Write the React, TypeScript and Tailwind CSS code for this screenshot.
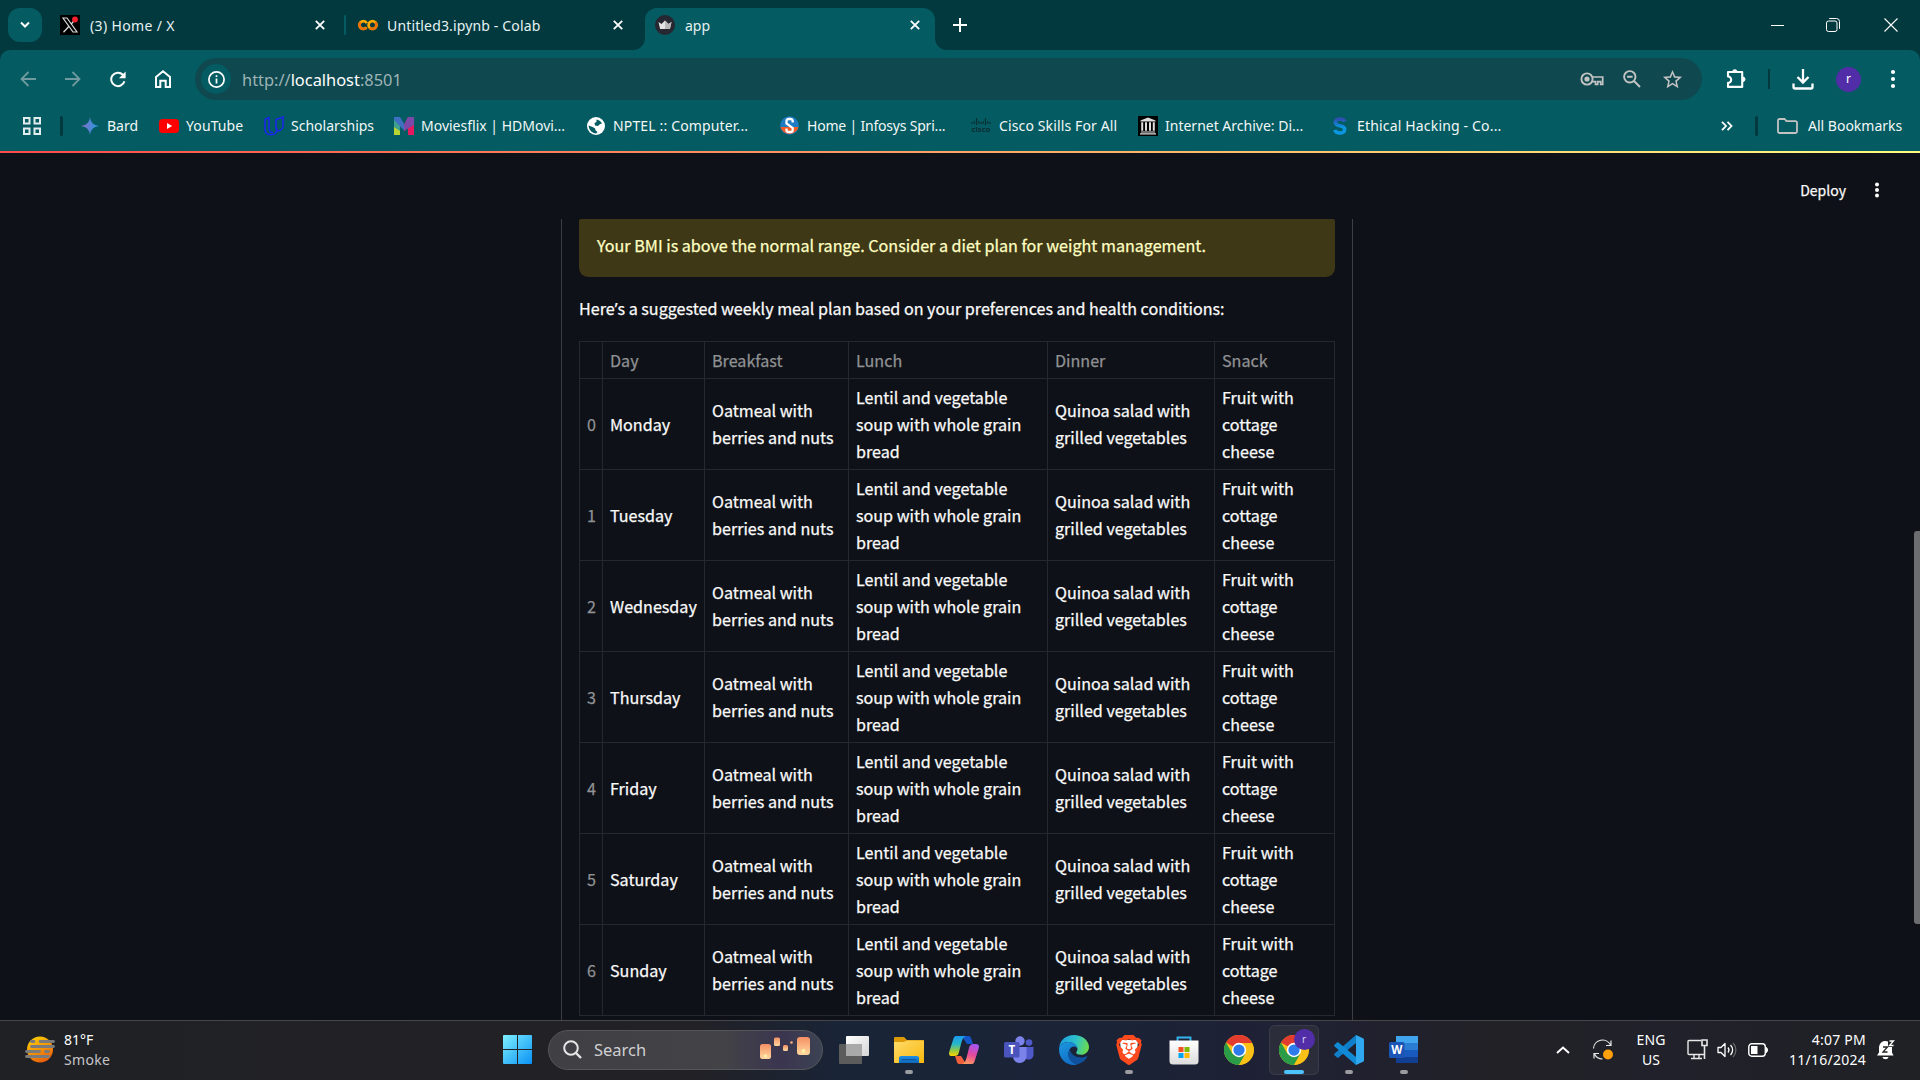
import React from 'react';
import { MdStarBorder } from 'react-icons/md';
import { SiBrave } from 'react-icons/si';

type Kids = { children?: React.ReactNode };

function Svg({ w, h, vb, className = '', children }: Kids & { w: number; h: number; vb?: string; className?: string }) {
  return (
    <svg width={w} height={h} viewBox={vb ?? `0 0 ${w} ${h}`} fill="none" className={'shrink-0 ' + className}>
      {children}
    </svg>
  );
}

/* ---------- Tab strip ---------- */

function TabClose() {
  return <Svg w={10} h={10} className="ml-[3px]"><path d="M.8.8l8.4 8.4M9.2.8L.8 9.2" stroke="#fff" strokeWidth="1.8" /></Svg>;
}

function TabStrip() {
  return (
    <div className="flex h-[50px] items-center bg-[#02393f] text-[14px] text-[#e6f1f2]">
      <div className="ml-2 grid h-[34px] w-[34px] place-items-center rounded-[12px] bg-[#045b61] text-white">
        <Svg w={12} h={8}><path d="M2 1.5l4 4 4-4" stroke="#fff" strokeWidth="2" /></Svg>
      </div>
      <div className="ml-[18px] flex w-[284px] items-center">
        <Svg w={20} h={20}>
          <rect width="20" height="20" fill="#000" />
          <path d="M3 3h4l10 14h-4z" stroke="#d8d8d8" strokeWidth="1.2" />
          <path d="M16.5 3L11 9.3M9 11.2L3.5 17.2" stroke="#d8d8d8" strokeWidth="1.3" />
          <circle cx="15" cy="4.5" r="2.9" fill="#f4212e" />
        </Svg>
        <span className="ml-[10px] w-[222px] pt-[2px] tracking-[0.35px]">(3) Home / X</span>
        <TabClose />
      </div>
      <div className="h-5 w-[2px] rounded bg-[#045b61]" />
      <div className="ml-3 flex w-[287px] items-center">
        <Svg w={20} h={20}>
          <circle cx="5.4" cy="10" r="3.9" stroke="#f9ab00" strokeWidth="2.8" strokeDasharray="19.5 5" strokeDashoffset="-2.4" />
          <circle cx="14.5" cy="10" r="3.9" stroke="#f9ab00" strokeWidth="2.8" />
          <path d="M11.7 12.8a3.9 3.9 0 0 0 5.6-5.6" stroke="#e8710a" strokeWidth="2.8" />
          <path d="M2.6 7.2a3.9 3.9 0 0 0 5.5 5.6" stroke="#e8710a" strokeWidth="2.8" />
        </Svg>
        <span className="ml-[9px] w-[223px] pt-[2px] tracking-[0.15px]">Untitled3.ipynb - Colab</span>
        <TabClose />
      </div>
      <div className="relative flex h-[42px] w-[290px] items-center self-end rounded-t-[12px] bg-[#045b61] pb-2 pl-[10px]">
        <Svg w={12} h={12} className="absolute bottom-0 -left-3"><path d="M12 0v12H0A12 12 0 0 0 12 0z" fill="#045b61" /></Svg>
        <Svg w={12} h={12} className="absolute bottom-0 -right-3"><path d="M0 0v12h12A12 12 0 0 1 0 0z" fill="#045b61" /></Svg>
        <Svg w={20} h={20}>
          <circle cx="10" cy="10" r="10" fill="#262730" />
          <path d="M3.5 7l3 2 3.500-3.600L13.500 9l3-2-1.600 7H5.100z" fill="#e4e4e4" />
          <path d="M10 5.400L13.500 9l3-2-1.600 7H10z" fill="#b9b9b9" />
        </Svg>
        <span className="ml-[10px] w-[222px] pt-[2px]">app</span>
        <TabClose />
      </div>
      <Svg w={14} h={14} className="ml-[18px]"><path d="M7 0v14M0 7h14" stroke="#fff" strokeWidth="2" /></Svg>
      <Svg w={13} h={14} className="mr-[42px] ml-auto"><path d="M0 7.5h13" stroke="#fff" /></Svg>
      <Svg w={14} h={14} className="mr-[44px]">
        <rect x=".5" y="3" width="10.5" height="10.5" rx="2" stroke="#fff" />
        <path d="M3.2.5h7.300a3 3 0 0 1 3 3v7.300" stroke="#fff" />
      </Svg>
      <Svg w={14} h={14} className="mr-[22px]"><path d="M.5.5l13 13M13.500.5l-13 13" stroke="#fff" strokeWidth="1.1" /></Svg>
    </div>
  );
}

/* ---------- Toolbar ---------- */

function Toolbar() {
  return (
    <div className="bg-[#02393f]">
      <div className="flex h-[50px] items-end rounded-t-[10px] bg-[#045b61]">
        <div className="flex h-[42px] w-[195px] items-center">
          <Svg w={16} h={16} className="ml-5"><path d="M16 8H1.500M8.500 1L1.500 8l7 7" stroke="#6f9a9f" strokeWidth="1.8" /></Svg>
          <Svg w={16} h={16} className="ml-[29px]"><path d="M0 8h14.500M7.500 1l7 7-7 7" stroke="#6f9a9f" strokeWidth="1.8" /></Svg>
          <Svg w={16} h={17} className="ml-[29px]">
            <path d="M14.400 10.200A6.700 6.700 0 1 1 12.800 3.800L14.600 5.800" stroke="#fff" strokeWidth="2" />
            <path d="M15.600.6v6.600H9z" fill="#fff" />
          </Svg>
          <Svg w={16} h={18} className="ml-[29px]">
            <path d="M1 7l7-5.700L15 7v10h-4.300v-6.200H5.300V17H1z" stroke="#fff" strokeWidth="2" />
          </Svg>
        </div>
        <div className="flex h-[42px] w-[1507px] items-center rounded-full bg-[#0f484f]">
          <div className="ml-[6px] grid h-[30px] w-[30px] place-items-center rounded-full bg-[#045b61]">
            <Svg w={17} h={17}>
              <circle cx="8.5" cy="8.5" r="7.6" stroke="#fff" strokeWidth="1.7" />
              <path d="M8.500 7.600v5M8.500 4.300v1.800" stroke="#fff" strokeWidth="1.7" />
            </Svg>
          </div>
          <span className="ml-[11px] pt-px text-[16.4px] text-[#9db4b6]">http://<span className="text-white">localhost</span>:8501</span>
          <Svg w={24} h={14} className="mr-[19px] ml-auto">
            <circle cx="7" cy="7" r="5.6" stroke="#c3c3c3" strokeWidth="1.9" />
            <circle cx="7" cy="7" r="2.6" fill="#c3c3c3" />
            <path d="M12.300 5h10.400v7.500h-2V9.700h-3v2.800h-2.200V9.700h-3.200" stroke="#c3c3c3" strokeWidth="1.7" />
          </Svg>
          <Svg w={18} h={18} className="mr-[20px]">
            <circle cx="6.8" cy="6.8" r="5.7" stroke="#c3c3c3" strokeWidth="1.9" />
            <path d="M4 6.800h5.600M11 11l6 6" stroke="#c3c3c3" strokeWidth="2" />
          </Svg>
          <MdStarBorder size={23} color="#c3c3c3" className="mr-[18px]" />
        </div>
        <div className="flex h-[42px] flex-1 items-center">
          <Svg w={22} h={22} className="ml-[23px]">
            <path d="M3 4h14.200v14.900H3v-4a3 3 0 0 0 0-6.400z" stroke="#fff" strokeWidth="2.1" strokeLinejoin="round" />
            <path d="M7.500 4a2.300 2.300 0 0 1 4.600 0zM17.700 9v4.600a2.300 2.300 0 0 0 0-4.600z" fill="#fff" stroke="#fff" />
          </Svg>
          <div className="ml-[21px] h-5 w-[2px] bg-[#02393f]" />
          <Svg w={22} h={21} className="ml-[22px]">
            <path d="M11 0v13M5.500 8l5.500 5.500L16.500 8M1.500 14.500v3.500a1.500 1.500 0 0 0 1.500 1.500h16a1.500 1.500 0 0 0 1.500-1.500v-3.500" stroke="#fff" strokeWidth="2.3" />
          </Svg>
          <div className="ml-[22px] grid h-[25px] w-[25px] place-items-center rounded-full bg-[#512da8] text-[12px] leading-none text-white">r</div>
          <Svg w={6} h={20} className="ml-[29px]"><g fill="#fff"><circle cx="3" cy="3" r="2.1" /><circle cx="3" cy="10" r="2.1" /><circle cx="3" cy="17" r="2.1" /></g></Svg>
        </div>
      </div>
    </div>
  );
}

/* ---------- Bookmarks ---------- */

const bookmarkIcons: Record<string, React.ReactNode> = {
  bard: (
    <Svg w={18} h={18}>
      <defs><linearGradient id="bard" x1="0" y1="0" x2="1" y2="0"><stop stopColor="#8a6fc4" /><stop offset="1" stopColor="#1f9be8" /></linearGradient></defs>
      <path d="M9 0c.8 5.600 3.400 8.200 9 9-5.600.8-8.200 3.400-9 9-.8-5.600-3.400-8.200-9-9 5.600-.8 8.200-3.400 9-9z" fill="url(#bard)" />
    </Svg>
  ),
  youtube: (
    <Svg w={20} h={14}><rect width="20" height="14" rx="3.500" fill="#f00" /><path d="M8 4l5.200 3L8 10z" fill="#fff" /></Svg>
  ),
  scholar: (
    <Svg w={20} h={20}>
      <path d="M1 3.500l4-2v10.500c0 3 1.500 4.500 4 4.500M1 3.500v9c0 4 2.500 6.300 6 6.300s6-2.300 6-6.300M12 3l0 9c0 2 2 3 3.500 2.500S19 12 19 10V1l-7 2.500" stroke="#1a26f0" strokeWidth="1.500" />
    </Svg>
  ),
  movies: (
    <Svg w={20} h={18}>
      <path d="M0 0h6v18H0z" fill="#3f9f8f" /><path d="M0 10l6 4v4H0z" fill="#b8d531" /><path d="M0 0h6l4.500 7.500V14L0 3z" fill="#3f6fc0" />
      <path d="M20 0h-6l-4 8v6.500l4-4.500V18h6z" fill="#d4246f" /><path d="M20 0h-6l-4 8v6l10-6z" fill="#7b4aa8" /><path d="M14 12l6-4v10h-6z" fill="#e5195e" />
    </Svg>
  ),
  globe: (
    <Svg w={18} h={18}>
      <circle cx="9" cy="9" r="9" fill="#fff" />
      <path d="M9.500 2.500c2 .5 4.500 1.500 5.500 4l-2 .5-2 2-3-.5-.5-2.500 2-1zM1.600 8.500l4 1.500 2.500 1.500.5 2 2 1.500-1.500 1.500C5 16 2 13.500 1.600 8.500z" fill="#045b61" />
    </Svg>
  ),
  infosys: (
    <Svg w={19} h={19}>
      <circle cx="9.500" cy="9.500" r="9.300" fill="#1e7cc4" /><path d="M.5 11a9.300 9.300 0 0 0 18 0z" fill="#f15a24" />
      <path d="M12.700 6.500V5a2 2 0 0 0-2-2H8.500a2 2 0 0 0-2 2v2.500l6.200 4.500v2a2 2 0 0 1-2 2H8.500a2 2 0 0 1-2-2v-1.500" stroke="#fff" strokeWidth="2.300" />
    </Svg>
  ),
  cisco: (
    <div className="flex w-5 flex-col items-center">
      <Svg w={20} h={7}><path d="M1 4v2M3.300 3v3M5.500 0v7M7.800 3v3M10 4v2M12.200 3v3M14.500 0v7M16.800 3v3M19 4v2" stroke="#0b2e33" strokeWidth="1.100" /></Svg>
      <span className="text-[7.5px] leading-[8px] font-bold text-[#0b2e33]">cisco</span>
    </div>
  ),
  archive: (
    <Svg w={20} h={20}>
      <rect width="20" height="20" fill="#000" />
      <path d="M2.500 4.500L10 1.500l7.500 3v1h-15zM3 15.500h14v1H3zM2 17.300h16v1.200H2z" fill="#ddd" />
      <path d="M4.200 6.300v8.500M8 6.300v8.500M12 6.300v8.500M15.800 6.300v8.500" stroke="#ddd" strokeWidth="2" />
    </Svg>
  ),
  s: (
    <Svg w={14} h={18}>
      <defs><linearGradient id="sg" x1="0" y1="0" x2="0" y2="1"><stop stopColor="#2d4fb0" /><stop offset=".6" stopColor="#0a96e0" /></linearGradient></defs>
      <path d="M12 4.500C11 2.600 9 2 7 2 4.500 2 2.300 3.200 2.300 5.200c0 4.800 9.400 2.200 9.400 7C11.700 14.600 9.500 16 7 16c-2.300 0-4.500-.8-5.300-3" stroke="url(#sg)" strokeWidth="3.600" />
    </Svg>
  ),
};

function Bookmark({ icon, label, iconCls, cls }: { icon: string; label: string; iconCls: string; cls: string }) {
  return (
    <div className={'flex shrink-0 items-center whitespace-nowrap ' + cls}>
      <div className={'flex shrink-0 justify-start ' + iconCls}>{bookmarkIcons[icon]}</div>
      <span>{label}</span>
    </div>
  );
}

function Bookmarks() {
  return (
    <div className="flex h-[51px] items-center bg-[#045b61] text-[14px] text-[#f2f7f7]">
      <Svg w={18} h={18} className="ml-[23px]">
        <g stroke="#e3eded" strokeWidth="2"><rect x="1" y="1" width="5.500" height="5.500" /><rect x="11.500" y="1" width="5.500" height="5.500" /><rect x="1" y="11.500" width="5.500" height="5.500" /><rect x="11.500" y="11.500" width="5.500" height="5.500" /></g>
      </Svg>
      <div className="mr-[18px] ml-[19px] h-5 w-[3px] rounded bg-[#02393f]" />
      <Bookmark icon="bard" label="Bard" iconCls="w-[26px]" cls="w-[78px]" />
      <Bookmark icon="youtube" label="YouTube" iconCls="w-[27px]" cls="w-[105px] tracking-[0.1px]" />
      <Bookmark icon="scholar" label="Scholarships" iconCls="w-[27px]" cls="w-[130px]" />
      <Bookmark icon="movies" label="Moviesflix | HDMovi..." iconCls="w-[27px]" cls="w-[193px]" />
      <Bookmark icon="globe" label="NPTEL :: Computer..." iconCls="w-[26px]" cls="w-[193px] tracking-[0.15px]" />
      <Bookmark icon="infosys" label="Home | Infosys Spri..." iconCls="w-[27px]" cls="w-[191px] tracking-[-0.2px]" />
      <Bookmark icon="cisco" label="Cisco Skills For All" iconCls="w-[28px]" cls="w-[167px] tracking-[0.13px]" />
      <Bookmark icon="archive" label="Internet Archive: Di..." iconCls="w-[27px]" cls="w-[195px]" />
      <Bookmark icon="s" label="Ethical Hacking - Co..." iconCls="w-[24px]" cls="w-[388px] tracking-[0.17px]" />
      <Svg w={12} h={10}><path d="M1 .8l4 4.200-4 4.200M6.500.8l4 4.200-4 4.200" stroke="#fff" strokeWidth="1.800" /></Svg>
      <div className="ml-[22px] h-5 w-[3px] rounded bg-[#02393f]" />
      <Svg w={21} h={16} className="mr-[10px] ml-[19px]"><path d="M1 13.500V2.500A1.500 1.500 0 0 1 2.500 1h5l2 2.200h9A1.500 1.500 0 0 1 20 4.700v8.800a1.500 1.500 0 0 1-1.500 1.500h-16A1.500 1.500 0 0 1 1 13.500z" stroke="#c3c3c3" strokeWidth="1.800" /></Svg>
      <span className="whitespace-nowrap">All Bookmarks</span>
    </div>
  );
}

/* ---------- App page ---------- */

const days = ['Monday', 'Tuesday', 'Wednesday', 'Thursday', 'Friday', 'Saturday', 'Sunday'];

function MealTable() {
  const cell = 'border border-[#25282d] py-0 pr-0 pl-[7px] text-left align-middle font-normal whitespace-nowrap';
  return (
    <table className="mt-[19px] w-[756px] table-fixed border-collapse">
      <colgroup>
        <col className="w-[23px]" /><col className="w-[102px]" /><col className="w-[144px]" />
        <col className="w-[199px]" /><col className="w-[167px]" /><col className="w-[120px]" />
      </colgroup>
      <thead>
        <tr className="h-[37px] text-[#909194]">
          <th className={cell} />
          {['Day', 'Breakfast', 'Lunch', 'Dinner', 'Snack'].map((h) => <th key={h} className={cell}>{h}</th>)}
        </tr>
      </thead>
      <tbody>
        {days.map((d, i) => (
          <tr key={d} className="h-[91px]">
            <td className={cell + ' text-[#909194]'}>{i}</td>
            <td className={cell}>{d}</td>
            <td className={cell}>Oatmeal with<br />berries and nuts</td>
            <td className={cell}>Lentil and vegetable<br />soup with whole grain<br />bread</td>
            <td className={cell}>Quinoa salad with<br />grilled vegetables</td>
            <td className={cell}>Fruit with<br />cottage<br />cheese</td>
          </tr>
        ))}
      </tbody>
    </table>
  );
}

function Page() {
  return (
    <div className="relative flex h-[869px] flex-col overflow-hidden bg-[#0e1117] font-['Noto_Sans_CJK_SC',sans-serif] text-[16.12px] leading-[27px] font-normal text-[#fafafa] [-webkit-text-stroke:0.25px]">
      <div className="h-[2px] w-full shrink-0 bg-[linear-gradient(90deg,#ff4b4b,#fffd80)]" />
      <div className="flex h-[66px] shrink-0 items-center justify-end pt-[8px]">
        <span className="text-[14px]">Deploy</span>
        <Svg w={6} h={16} className="mr-[40px] ml-[28px]"><g fill="#fff"><circle cx="3" cy="2.500" r="2" /><circle cx="3" cy="8" r="2" /><circle cx="3" cy="13.500" r="2" /></g></Svg>
      </div>
      <div className="ml-[561px] h-[801px] w-[792px] shrink-0 overflow-hidden border-x border-[#3c3e44] px-[17px]">
        <div className="flex h-[58px] w-[756px] items-center rounded-t-[2px] rounded-b-[9px] bg-[#3e3817] pb-[6px] pl-[18px] text-[#ffffc2]">
          Your BMI is above the normal range. Consider a diet plan for weight management.
        </div>
        <p className="mt-[18px] h-[27px] whitespace-nowrap">Here<span className="font-['Noto_Sans']">’</span>s a suggested weekly meal plan based on your preferences and health conditions:</p>
        <MealTable />
      </div>
      <div className="absolute top-[380px] right-0 h-[393px] w-[6px] rounded-l-[3px] bg-[#6b6d71]" />
    </div>
  );
}

/* ---------- Taskbar ---------- */

function ChromeLogo() {
  return (
    <Svg w={30} h={30} vb="0 0 48 48">
      <circle cx="24" cy="24" r="24" fill="#fbc116" />
      <path d="M24 24L3.200 12A24 24 0 0 1 44.800 12L44.800 13H24z" fill="#e33b2e" />
      <path d="M3.200 12A24 24 0 0 0 24 48l10.400-18L24 24l-10.400 6z" fill="#2a9c48" />
      <path d="M24 13h20.800A24 24 0 0 1 24 48l10.400-18z" fill="#fbc116" />
      <circle cx="24" cy="24" r="11.500" fill="#fff" /><circle cx="24" cy="24" r="9" fill="#2d7bea" />
    </Svg>
  );
}

const TaskView = (
  <Svg w={30} h={28}>
    <defs><linearGradient id="tv" x1="0" y1="0" x2="1" y2="1"><stop stopColor="#fff" /><stop offset="1" stopColor="#d5d5d5" /></linearGradient></defs>
    <rect y="8" width="23" height="20" rx="1" fill="#5c5c5c" /><rect x="7" width="23" height="20" rx="1" fill="url(#tv)" /><path d="M7 8h16v12H7z" fill="#a9a9a9" />
  </Svg>
);

const Explorer = (
  <Svg w={30} h={27}>
    <defs><linearGradient id="fo" x1="0" y1="0" x2="1" y2="1"><stop stopColor="#ffdc6b" /><stop offset="1" stopColor="#f7b70c" /></linearGradient>
      <linearGradient id="fb" x1="0" y1="0" x2="0" y2="1"><stop stopColor="#1d8fe6" /><stop offset="1" stopColor="#0f68b8" /></linearGradient></defs>
    <path d="M0 2a1 1 0 0 1 1-1h9l3 3h16a1 1 0 0 1 1 1v3H0z" fill="#dd9a08" />
    <path d="M0 6h10l3-1.500h17V27H1a1 1 0 0 1-1-1z" fill="url(#fo)" />
    <path d="M5 27v-5a2 2 0 0 1 2-2h16a2 2 0 0 1 2 2v5z" fill="url(#fb)" /><path d="M8 23.700h14" stroke="#0b4f96" />
  </Svg>
);

const Copilot = (
  <Svg w={30} h={28}>
    <defs>
      <linearGradient id="c1" x1="0" y1="0" x2="0" y2="1"><stop stopColor="#1b9af0" /><stop offset=".4" stopColor="#26b7c9" /><stop offset=".75" stopColor="#9ccb3c" /><stop offset="1" stopColor="#ffd400" /></linearGradient>
      <linearGradient id="c2" x1=".6" y1="0" x2=".3" y2="1"><stop stopColor="#a755f0" /><stop offset=".5" stopColor="#e3499c" /><stop offset="1" stopColor="#ff9a5c" /></linearGradient>
    </defs>
    <path d="M13 0h6c3 0 3 2 4 5l1 3h-6l-2-3z" fill="#1456c8" />
    <path d="M7 0h10c-3 1-4 4-5 8l-2 8c-.8 3-2 4-4.500 4H3c-3 0-3.500-2-2.500-5L4 4c1-3 1.500-4 3-4z" fill="url(#c1)" />
    <path d="M17 28h-6c-3 0-3-2-4-5l-1-3h6l2 3z" fill="#f0603c" />
    <path d="M23 28H13c3-1 4-4 5-8l2-8c.8-3 2-4 4.500-4H27c3 0 3.500 2 2.500 5L26 24c-1 3-1.500 4-3 4z" fill="url(#c2)" />
  </Svg>
);

const Teams = (
  <Svg w={30} h={28}>
    <circle cx="25" cy="6.500" r="3.300" fill="#5059c9" /><circle cx="16" cy="5" r="4.700" fill="#7b83eb" />
    <path d="M20 11h9.500v7.500c0 3-2.200 5-5 5s-5-2-5-5z" fill="#5059c9" />
    <path d="M9 11h13.500v9c0 4-3 7-6.800 7S9 24 9 20z" fill="#7b83eb" />
    <rect y="6" width="15.500" height="15.500" rx="1.500" fill="#4b53bc" />
    <text x="7.700" y="18" textAnchor="middle" fontSize="11.500" fontWeight="700" fill="#fff">T</text>
  </Svg>
);

const Edge = (
  <Svg w={30} h={30}>
    <defs>
      <linearGradient id="e1" x1="0" y1=".3" x2="1" y2=".5"><stop stopColor="#1b9de2" /><stop offset=".55" stopColor="#2fc2c8" /><stop offset="1" stopColor="#6bdc4c" /></linearGradient>
      <linearGradient id="e2" x1="0" y1="0" x2=".4" y2="1"><stop stopColor="#1b98e0" /><stop offset="1" stopColor="#1170c8" /></linearGradient>
    </defs>
    <path d="M0 13C1 5 7 0 15 0s15 5.500 15 12c0 4.500-3.500 7.800-8 7.800-3 0-4.800-1-4.800-2.300 0-.8 1.300-1.500 1.300-3.500 0-3.500-4-7-9-7S1 9.500 0 13z" fill="url(#e1)" />
    <path d="M0 14c0-4 4.500-7 9.500-7 5.500 0 9 3.500 9 7-.5-1.500-2-2.500-3.500-2.500C12 11.500 9.500 15 9.500 19c0 6 4.500 9.500 9 10.300-1 .5-2.300.7-3.500.7C6.500 30 0 23.500 0 14z" fill="url(#e2)" />
    <path d="M11 14.500c-1 1.500-1.500 3-1.500 4.800 0 6.200 5 10 9.500 10 4-1.200 7.500-4 9.200-7.300.3-.6-.3-1-.9-.7-2 1-3.500 1.200-5.300 1.200-5.500 0-10.500-3.500-11-8z" fill="#10519e" />
  </Svg>
);

const Brave = (
  <div className="grid place-items-center">
    <svg width="26" height="30" viewBox="0 0 26 30" className="col-start-1 row-start-1"><path d="M4 5h18l-1 14-8 8-8-8z" fill="#fff" /></svg>
    <SiBrave size={30} color="#fb4a1e" className="col-start-1 row-start-1" />
  </div>
);

const Store = (
  <Svg w={30} h={30}>
    <defs><linearGradient id="st" x1="0" y1="0" x2="0" y2="1"><stop stopColor="#fff" /><stop offset="1" stopColor="#dcdcdc" /></linearGradient></defs>
    <path d="M8.500 7V2.500H21.500V7" stroke="#35b5f0" strokeWidth="1.800" />
    <path d="M.5 5.500h29V26a3.500 3.500 0 0 1-3.500 3.500H4A3.500 3.500 0 0 1 .5 26z" fill="url(#st)" />
    <path d="M9.500 12h5v5h-5z" fill="#f25022" /><path d="M15.500 12h5v5h-5z" fill="#7fba00" /><path d="M9.500 18h5v5h-5z" fill="#00a4ef" /><path d="M15.500 18h5v5h-5z" fill="#ffb900" />
  </Svg>
);

const VsCode = (
  <Svg w={30} h={30}>
    <path d="M22 0v8L4.500 22.500c-.5.4-1 .4-1.500 0L.6 20.300c-.6-.6-.6-1.200 0-1.800z" fill="#0f7fc9" />
    <path d="M22 30v-8L4.500 7.500c-.5-.4-1-.4-1.500 0L.6 9.700c-.6.6-.6 1.200 0 1.800z" fill="#1289d4" />
    <path d="M22 0l7 3.200c.7.400 1 .8 1 1.600v20.400c0 .8-.3 1.200-1 1.600L22 30z" fill="#2fa8f0" />
  </Svg>
);

const Word = (
  <Svg w={30} h={28}>
    <path d="M7 0h22v7H7z" fill="#41a5ee" /><path d="M7 7h22v7H7z" fill="#2b7cd3" /><path d="M7 14h22v7H7z" fill="#185abd" /><path d="M7 21h22v6H7z" fill="#103f91" />
    <rect y="6" width="15.500" height="16" rx="1.500" fill="#1b55b5" />
    <text x="7.800" y="18" textAnchor="middle" fontSize="11.500" fontWeight="700" fill="#fff">W</text>
  </Svg>
);

const ActiveChrome = (
  <div className="relative">
    <ChromeLogo />
    <div className="absolute -top-[6px] left-[15px] grid h-[21px] w-[21px] place-items-center rounded-full bg-[#512da8] text-[10px] leading-none text-[#d8cdf0]">r</div>
  </div>
);

const apps: { icon: React.ReactNode; state?: 'open' | 'active' }[] = [
  { icon: TaskView }, { icon: Explorer, state: 'open' }, { icon: Copilot }, { icon: Teams }, { icon: Edge },
  { icon: Brave, state: 'open' }, { icon: Store }, { icon: <ChromeLogo /> }, { icon: ActiveChrome, state: 'active' },
  { icon: VsCode, state: 'open' }, { icon: Word, state: 'open' },
];

function Taskbar() {
  return (
    <div className="flex h-[60px] items-center border-t border-[#45474b] bg-[linear-gradient(90deg,#1f2125_0%,#222126_25%,#222126_36%,#192437_44%,#1b2337_58%,#1f2135_66%,#222126_78%,#20212a_86%,#202125_100%)] pb-[2px] text-white">
      <Svg w={30} h={27} className="ml-[25px]">
        <defs><linearGradient id="sun" x1=".2" y1="0" x2=".7" y2="1"><stop stopColor="#ffd000" /><stop offset="1" stopColor="#e85a0c" /></linearGradient></defs>
        <circle cx="15" cy="13.500" r="13" fill="url(#sun)" />
        <path d="M6.500 5.500H9M15 5.500h13.500M6.500 10.500h22M1.500 15.500h13M20.500 15.500h3M1.500 20.500h22" stroke="#7b7b7b" strokeWidth="2.800" strokeLinecap="round" />
      </Svg>
      <div className="ml-[9px] w-[439px] text-[14px] leading-5">
        <div>81°F</div>
        <div className="tracking-[0.3px] text-[#c5c5c7]">Smoke</div>
      </div>
      <Svg w={29} h={29}>
        <defs><linearGradient id="win" x1="0" y1="0" x2="1" y2="1"><stop stopColor="#7ef0ff" /><stop offset="1" stopColor="#0a91f5" /></linearGradient></defs>
        <path d="M1 0h13v14H0V1a1 1 0 0 1 1-1zM15 0h13a1 1 0 0 1 1 1v13H15zM0 15h14v14H1a1 1 0 0 1-1-1zM15 15h14v13a1 1 0 0 1-1 1H15z" fill="url(#win)" />
      </Svg>
      <div className="ml-4 flex h-10 w-[275px] items-center rounded-full border border-[#55565a] bg-[linear-gradient(90deg,#3f3f44,#424247_65%,#3b3550_85%,#3c4353)]">
        <Svg w={19} h={19} className="ml-[14px]"><circle cx="8" cy="8" r="6.800" stroke="#e6e6e6" strokeWidth="2" /><path d="M13 13l5 5" stroke="#e6e6e6" strokeWidth="2.400" /></Svg>
        <span className="ml-[12px] text-[16.5px] text-[#d0d0d2]">Search</span>
        <Svg w={52} h={24} className="mr-[11px] mb-1 ml-auto">
          <defs><linearGradient id="la" x1="0" y1="0" x2="0" y2="1"><stop stopColor="#f58f63" /><stop offset="1" stopColor="#ffd9a0" /></linearGradient></defs>
          <rect x="1" y="8" width="11" height="15" rx="2.500" fill="url(#la)" /><rect x="15" y="1.500" width="6" height="8.500" rx="1.500" fill="url(#la)" />
          <rect x="24" y="9" width="5" height="6" rx="1.500" fill="url(#la)" /><circle cx="32.500" cy="6.500" r="1.300" fill="#ffae80" />
          <rect x="38" y="1" width="13" height="18" rx="3" fill="url(#la)" /><circle cx="6.500" cy="20" r="1.800" fill="#fff0a8" /><circle cx="44.500" cy="15" r="2" fill="#fff0a8" />
        </Svg>
      </div>
      <div className="ml-[3px] flex">
        {apps.map((a, i) => (
          <div key={i} className="flex h-[50px] w-[55px] justify-center">
            <div className={'relative grid h-[50px] w-[50px] place-items-center rounded-[6px] ' + (a.state === 'active' ? 'bg-[#2b2d3b] ring-1 ring-[#393b4a] ring-inset' : '')}>
              {a.icon}
              {a.state === 'open' && <div className="absolute bottom-[1px] h-1 w-2 rounded-full bg-[#9a9ca0]" />}
              {a.state === 'active' && <div className="absolute bottom-[1px] h-1 w-5 rounded-full bg-[#4cc2ff]" />}
            </div>
          </div>
        ))}
      </div>
      <Svg w={14} h={8} className="ml-[125px]"><path d="M1 7l6-5.500L13 7" stroke="#fff" strokeWidth="2" /></Svg>
      <Svg w={22} h={22} className="ml-[22px]">
        <path d="M1.500 9.500A9 9 0 0 1 18.500 6M19 1.500V6.500H14M2 19.500v-5h5M2.500 15a9 9 0 0 0 8 5" stroke="#e8e8e8" strokeWidth="1.200" />
        <circle cx="16" cy="15.500" r="5" fill="#ff9f0a" />
      </Svg>
      <div className="ml-[21px] w-[32px] text-center text-[14px] leading-5 tracking-[0.1px]">ENG<br />US</div>
      <Svg w={21} h={21} className="ml-[20px]">
        <path d="M14 1.500H2a1 1 0 0 0-1 1v12a1 1 0 0 0 1 1h15M7 16v3M12 16v3M4 19.500h11" stroke="#e8e8e8" strokeWidth="1.400" />
        <path d="M15 1h5v5.500h-5zM17.500 6.500V20" stroke="#e8e8e8" strokeWidth="1.600" />
      </Svg>
      <Svg w={21} h={18} className="ml-[9px]">
        <path d="M1 6.500h3l4-4v13l-4-4H1z" stroke="#fff" strokeWidth="1.300" strokeLinejoin="round" />
        <path d="M11 6.500a4 4 0 0 1 0 5M13.500 4a7 7 0 0 1 0 10" stroke="#fff" strokeWidth="1.300" /><path d="M16 2a10 10 0 0 1 0 14" stroke="#666" strokeWidth="1.300" />
      </Svg>
      <Svg w={21} h={14} className="ml-[10px]"><rect x=".8" y=".8" width="16.500" height="12.400" rx="3" stroke="#fff" strokeWidth="1.400" /><rect x="3" y="3" width="6.500" height="8" fill="#fff" /><path d="M18 4.500c2 0 2 5 0 5z" fill="#fff" stroke="#fff" /></Svg>
      <div className="ml-[9px] w-[88px] text-right text-[14px] leading-5 tracking-[0.25px] whitespace-nowrap">4:07 PM<br />11/16/2024</div>
      <Svg w={18} h={20} className="ml-[11px]">
        <path d="M0 15.500l2-3V7.500a6.500 6.500 0 0 1 9-6V7h4v5.500l1.500 3zM5.500 17h6c-.5 3-5.500 3-6 0z" fill="#fff" />
        <path d="M6 7h4.500L6 12h4.500" stroke="#222" strokeWidth="1.300" /><path d="M12.500 1h4l-4 4.500h4" stroke="#fff" strokeWidth="1.300" />
      </Svg>
    </div>
  );
}

export default function App() {
  return (
    <div className="flex h-[1080px] w-[1920px] flex-col overflow-hidden bg-[#0e1117] font-['Noto_Sans',sans-serif] leading-5">
      <TabStrip />
      <Toolbar />
      <Bookmarks />
      <Page />
      <Taskbar />
    </div>
  );
}
